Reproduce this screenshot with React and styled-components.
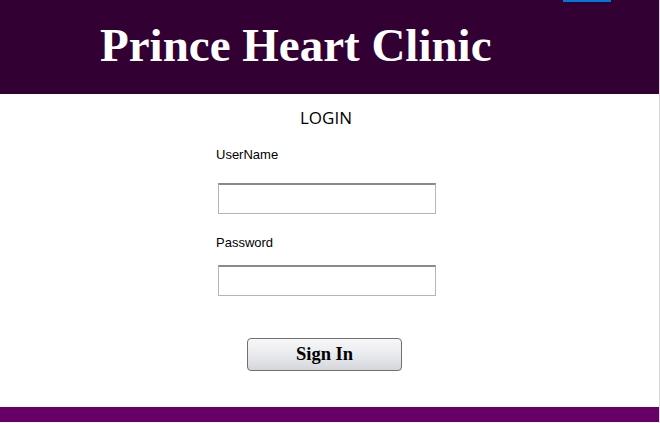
import React from 'react';
import styled, { createGlobalStyle } from 'styled-components';

const GlobalStyle = createGlobalStyle`
  html, body {
    margin: 0;
    padding: 0;
    background: #ffffff;
    overflow: hidden;
  }
  body {
    font-family: "Liberation Sans", Arial, sans-serif;
  }
`;

const Page = styled.div`
  width: 660px;
  height: 423px;
  display: flex;
  flex-direction: column;
  position: relative;
  background: #ffffff;
  border-right: 1px solid #d8d8d8;
  box-sizing: border-box;
`;

// thin blue strip over the header's top edge
const TopStrip = styled.div`
  position: absolute;
  top: 0;
  left: 563px;
  width: 48px;
  height: 2px;
  background: #0078d7;
`;

const Header = styled.header`
  height: 94px;
  background-color: #330033;
  display: flex;
  align-items: center;
  padding-left: 100px;
  padding-bottom: 4px;
  box-sizing: border-box;
`;

const Title = styled.h1`
  margin: 0;
  color: #ffffff;
  font-family: "Liberation Serif", "Times New Roman", serif;
  font-weight: bold;
  font-size: 47px;
`;

const Main = styled.main`
  flex: 1;
  padding: 14px 0 0 216px;
  box-sizing: border-box;
`;

const Form = styled.form`
  width: 220px;
  display: flex;
  flex-direction: column;
  align-items: flex-start;
`;

const Heading = styled.h2`
  align-self: stretch;
  margin: 0 0 20px 0;
  font-family: "Open Sans", "Liberation Sans", sans-serif;
  font-weight: normal;
  font-size: 17px;
  line-height: 20px;
  text-align: center;
  color: #000000;
`;

const Label = styled.label`
  display: block;
  font-size: 13px;
  line-height: 14px;
  color: #000000;
  margin-bottom: ${p => p.$gap}px;
`;

const Input = styled.input`
  width: 218px;
  height: 31px;
  margin: 0 0 ${p => p.$gap || 0}px 2px;
  box-sizing: border-box;
  border: 1px solid #b5b5b5;
  border-top: 2px solid #8a8a8a;
  background: #ffffff;
  outline: none;
`;

const Button = styled.button`
  margin: 42px 0 0 31px;
  width: 155px;
  height: 33px;
  padding: 0;
  border: 1px solid #707070;
  border-radius: 4px;
  background: linear-gradient(to bottom, #f7f7f8 0%, #e8e9ed 55%, #d4d6db 100%);
  font-family: "Liberation Serif", "Times New Roman", serif;
  font-weight: bold;
  font-size: 18.5px;
  color: #000000;
  cursor: pointer;
`;

const Footer = styled.footer`
  height: 15px;
  margin-bottom: 1px;
  background-color: #660066;
`;

export default function App() {
  return (
    <>
      <GlobalStyle />
      <Page>
        <TopStrip />
        <Header>
          <Title>Prince Heart Clinic</Title>
        </Header>
        <Main>
          <Form onSubmit={e => e.preventDefault()}>
            <Heading>LOGIN</Heading>
            <Label $gap={21}>UserName</Label>
            <Input type="text" $gap={22} />
            <Label $gap={15}>Password</Label>
            <Input type="password" />
            <Button type="submit">Sign In</Button>
          </Form>
        </Main>
        <Footer />
      </Page>
    </>
  );
}
